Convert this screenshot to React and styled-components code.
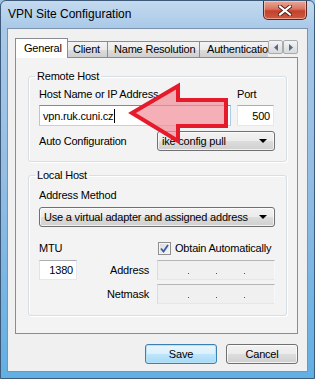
import React from "react";
import styled, { createGlobalStyle } from "styled-components";

const GlobalStyle = createGlobalStyle`
  html, body { margin: 0; padding: 0; background: #9cc3e5; }
  body {
    font-family: "Liberation Sans", Arial, sans-serif;
    font-size: 11px;
    letter-spacing: -0.2px;
    color: #000;
  }
  * { box-sizing: border-box; }
`;

const Window = styled.div`
  position: relative;
  width: 315px;
  height: 379px;
  display: flex;
  flex-direction: column;
  border: 1px solid #3d5a7a;
  border-radius: 6px 6px 0 0;
  background: linear-gradient(
    180deg,
    #c4daef 0px,
    #a9c9e8 27px,
    #93bde3 180px,
    #62afe3 100%
  );
`;

const TitleBar = styled.div`
  height: 27px;
  display: flex;
  align-items: flex-start;
  justify-content: space-between;
  padding: 0 7px;
`;

const Title = styled.div`
  margin-top: 6px;
  font-size: 12px;
  letter-spacing: 0;
  line-height: 15px;
`;

const CloseButton = styled.div`
  width: 44px;
  height: 19px;
  border: 1px solid #5a2420;
  border-top: none;
  border-radius: 0 0 5px 5px;
  background: linear-gradient(180deg, #e9a99a 0%, #d8735f 45%, #c4412c 55%, #cf5a3e 100%);
  box-shadow: inset 0 0 0 1px rgba(255, 220, 210, 0.55);
  display: flex;
  align-items: center;
  justify-content: center;
`;

const Client = styled.div`
  flex: 1;
  margin: 0 6px 6px 6px;
  border: 1px solid #7c93ab;
  background: #f0f0f0;
  display: flex;
  flex-direction: column;
  padding: 9px 9px 0 7px;
`;

const TabStrip = styled.div`
  display: flex;
  align-items: flex-end;
  height: 20px;
  position: relative;
  z-index: 2;
`;

const Tabs = styled.div`
  flex: 1;
  display: flex;
  align-items: flex-end;
  height: 20px;
  overflow: hidden;
`;

const Tab = styled.div`
  flex: none;
  width: ${(p) => p.$w}px;
  height: ${(p) => (p.$active ? 20 : 16)}px;
  margin-left: ${(p) => (p.$first ? 0 : -1)}px;
  margin-bottom: ${(p) => (p.$active ? 0 : 1)}px;
  border: 1px solid #898c95;
  border-bottom: none;
  background: ${(p) =>
    p.$active
      ? "#fff"
      : "linear-gradient(180deg, #f3f3f3 0%, #ebebeb 50%, #dddddd 51%, #cfcfcf 100%)"};
  position: relative;
  z-index: ${(p) => (p.$active ? 2 : 1)};
  padding-left: ${(p) => p.$pad}px;
  line-height: ${(p) => (p.$active ? 18 : 14)}px;
  white-space: nowrap;
  overflow: hidden;
`;

const ScrollButtons = styled.div`
  display: flex;
  align-self: flex-start;
  margin-top: 2px;
`;

const ScrollButton = styled.div`
  width: 15px;
  height: 14px;
  border: 1px solid #a7abb0;
  border-radius: 2px;
  background: linear-gradient(180deg, #f4f4f4 0%, #e6e6e6 50%, #d9d9d9 100%);
  display: flex;
  align-items: center;
  justify-content: center;
`;

const Panel = styled.div`
  height: 277px;
  margin-top: -1px;
  border: 1px solid #898c95;
  background: #f3f3f3;
  padding: 0 10px 0 12px;
  position: relative;
  z-index: 1;
`;

const Group = styled.fieldset`
  margin: ${(p) => p.$top}px 0 0 0;
  padding: 0;
  border: 1px solid #d5dfe5;
  border-radius: 3px;
  box-shadow: inset 1px 1px 0 #fff, 1px 1px 0 #fff;
  min-width: 0;
`;

const Legend = styled.legend`
  margin-left: 6px;
  padding: 0 2px;
  line-height: 15px;
`;

const GroupBody = styled.div`
  padding: ${(p) => p.$pt}px 11px ${(p) => p.$pb}px 10px;
`;

const HostGrid = styled.div`
  display: grid;
  grid-template-columns: 192px 37px;
  column-gap: 6px;
  row-gap: 3px;
`;

const Label = styled.div`
  line-height: 15px;
  white-space: nowrap;
  text-align: ${(p) => (p.$right ? "right" : "left")};
  align-self: center;
`;

const TextInput = styled.div`
  height: ${(p) => p.$h || 21}px;
  border: 1px solid;
  border-color: ${(p) =>
    p.$focus ? "#5b92c8 #a9cbe8 #b7d4ee #a9cbe8" : "#abadb3 #e3e9ef #e3e9ef #e2e3ea"};
  background: #fff;
  display: flex;
  align-items: center;
  justify-content: ${(p) => (p.$right ? "flex-end" : "flex-start")};
  padding: 0 3px;
  white-space: nowrap;
`;

const Caret = styled.span`
  display: inline-block;
  width: 1px;
  height: 14px;
  background: #000;
  margin-left: 1px;
`;

const ConfigRow = styled.div`
  display: flex;
  align-items: center;
  justify-content: space-between;
  margin-top: 5px;
`;

const Combo = styled.div`
  width: ${(p) => (p.$w ? `${p.$w}px` : "100%")};
  height: 20px;
  border: 1px solid #707070;
  border-radius: 3px;
  background: linear-gradient(180deg, #f2f2f2 0%, #ebebeb 50%, #dddddd 51%, #cfcfcf 100%);
  box-shadow: inset 0 0 0 1px rgba(255, 255, 255, 0.7);
  display: flex;
  align-items: center;
  justify-content: space-between;
  padding: 0 7px 0 4px;
  white-space: nowrap;
  margin-top: ${(p) => p.$mt || 0}px;
`;

const Triangle = styled.span`
  width: 0;
  height: 0;
  border-left: 4px solid transparent;
  border-right: 4px solid transparent;
  border-top: 4px solid #000;
`;

const LocalGrid = styled.div`
  display: grid;
  grid-template-columns: 38px 1fr 118px;
  grid-template-rows: 15px 20px 20px;
  column-gap: 8px;
  row-gap: 4px;
  margin-top: 14px;
`;

const CheckRow = styled.div`
  display: flex;
  align-items: center;
  gap: 4px;
  margin-left: 1px;
`;

const CheckBox = styled.div`
  width: 13px;
  height: 13px;
  border: 1px solid #8e8f8f;
  background: linear-gradient(135deg, #dcdcdc 0%, #f6f6f6 100%);
  box-shadow: inset 0 0 0 1px #f4f4f4;
  display: flex;
  align-items: center;
  justify-content: center;
`;

const IpField = styled.div`
  height: 20px;
  border: 1px solid;
  border-color: #b5b5b5 #f8f8f8 #e6e6e6 #dcdcdc;
  background: #f0f0f0;
  display: flex;
  align-items: center;
  padding-left: 30px;
  gap: 27px;
`;

const Dot = styled.span`
  width: 1px;
  height: 1px;
  background: #555;
  margin-top: 6px;
`;

const ButtonRow = styled.div`
  display: flex;
  justify-content: flex-end;
  gap: 9px;
  margin-top: 10px;
`;

const Button = styled.div`
  width: 72px;
  height: 20px;
  border: 1px solid ${(p) => (p.$default ? "#3c7fb1" : "#707070")};
  border-radius: 3px;
  background: ${(p) =>
    p.$default
      ? "linear-gradient(180deg, #eaf6fd 0%, #d9f0fc 50%, #bee6fd 51%, #a7d9f5 100%)"
      : "linear-gradient(180deg, #f2f2f2 0%, #ebebeb 50%, #dddddd 51%, #cfcfcf 100%)"};
  box-shadow: inset 0 0 0 1px ${(p) => (p.$default ? "#b9e2f7" : "rgba(255,255,255,0.75)")};
  display: flex;
  align-items: center;
  justify-content: center;
`;

const Arrow = styled.svg`
  position: absolute;
  left: -1px;
  top: -1px;
  pointer-events: none;
  z-index: 5;
`;

const IpDots = () => (
  <IpField>
    <Dot />
    <Dot />
    <Dot />
  </IpField>
);

const App = () => {
  return (
    <>
      <GlobalStyle />
      <Window>
        <TitleBar>
          <Title>VPN Site Configuration</Title>
          <CloseButton>
            <svg width="14" height="11" viewBox="0 0 14 11">
              <path d="M2 1.5 L12 9.5 M12 1.5 L2 9.5" stroke="#4a1e18" strokeWidth="4" strokeLinecap="square" />
              <path d="M2 1.5 L12 9.5 M12 1.5 L2 9.5" stroke="#fff" strokeWidth="2.2" strokeLinecap="square" />
            </svg>
          </CloseButton>
        </TitleBar>
        <Client>
          <TabStrip>
            <Tabs>
              <Tab $active $first $w={53} $pad={8}>General</Tab>
              <Tab $w={41} $pad={5}>Client</Tab>
              <Tab $w={93} $pad={6}>Name Resolution</Tab>
              <Tab $w={92} $pad={7}>Authentication</Tab>
            </Tabs>
            <ScrollButtons>
              <ScrollButton>
                <svg width="4" height="7" viewBox="0 0 4 7">
                  <path d="M4 0 L0 3.5 L4 7 Z" fill="#4d6a9a" />
                </svg>
              </ScrollButton>
              <ScrollButton>
                <svg width="4" height="7" viewBox="0 0 4 7">
                  <path d="M0 0 L4 3.5 L0 7 Z" fill="#4d6a9a" />
                </svg>
              </ScrollButton>
            </ScrollButtons>
          </TabStrip>
          <Panel>
            <Group $top={11}>
              <Legend>Remote Host</Legend>
              <GroupBody $pt={3} $pb={10}>
                <HostGrid>
                  <Label>Host Name or IP Address</Label>
                  <Label>Port</Label>
                  <TextInput $focus>
                    vpn.ruk.cuni.cz
                    <Caret />
                  </TextInput>
                  <TextInput $right>500</TextInput>
                </HostGrid>
                <ConfigRow>
                  <Label>Auto Configuration</Label>
                  <Combo $w={118}>
                    <span>ike config pull</span>
                    <Triangle />
                  </Combo>
                </ConfigRow>
              </GroupBody>
            </Group>
            <Group $top={6}>
              <Legend>Local Host</Legend>
              <GroupBody $pt={5} $pb={11}>
                <Label>Address Method</Label>
                <Combo $mt={4}>
                  <span>Use a virtual adapter and assigned address</span>
                  <Triangle />
                </Combo>
                <LocalGrid>
                  <Label>MTU</Label>
                  <span />
                  <CheckRow>
                    <CheckBox>
                      <svg width="9" height="9" viewBox="0 0 9 9">
                        <path d="M1 4.5 L3.5 7.5 L8 1" stroke="#3d5aa8" strokeWidth="1.8" fill="none" />
                      </svg>
                    </CheckBox>
                    <Label>Obtain Automatically</Label>
                  </CheckRow>
                  <TextInput $right $h={20}>1380</TextInput>
                  <Label $right>Address</Label>
                  <IpDots />
                  <span />
                  <Label $right>Netmask</Label>
                  <IpDots />
                </LocalGrid>
              </GroupBody>
            </Group>
          </Panel>
          <ButtonRow>
            <Button $default>Save</Button>
            <Button>Cancel</Button>
          </ButtonRow>
        </Client>
        <Arrow width="315" height="379" viewBox="0 0 315 379">
          <polygon
            points="132,113 178,86 178,100 226,100 226,126 178,126 178,141"
            fill="#f0909b"
            fillOpacity="0.72"
            stroke="#e51a2b"
            strokeWidth="4"
            strokeLinejoin="miter"
          />
        </Arrow>
      </Window>
    </>
  );
};

export default App;
